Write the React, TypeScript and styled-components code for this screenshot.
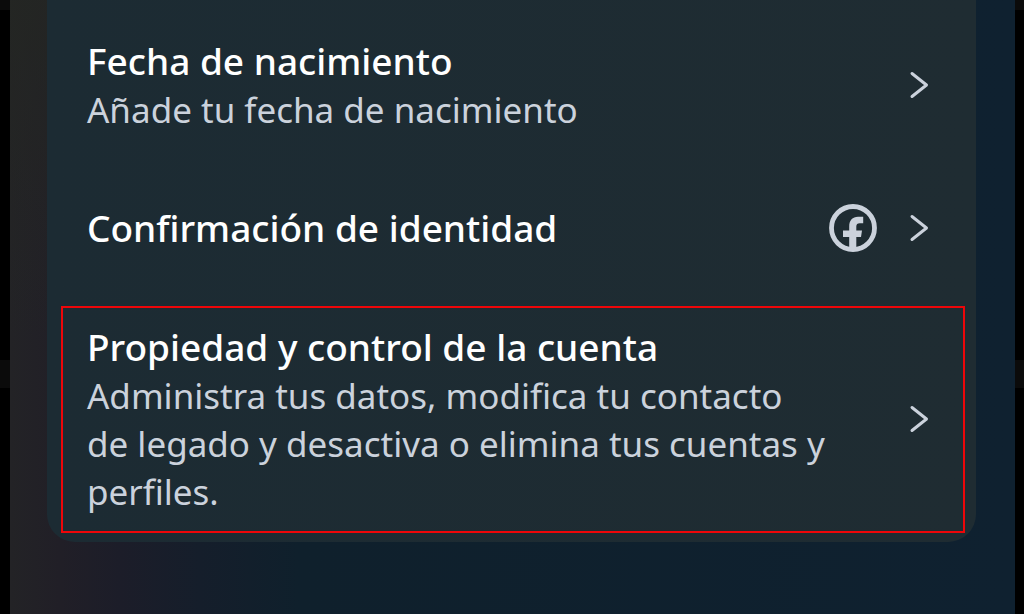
import React from "react";
import styled, { createGlobalStyle } from "styled-components";

const GlobalStyle = createGlobalStyle`
  * { box-sizing: border-box; }
  body {
    margin: 0;
    background: #000;
    font-family: "Noto Sans", "Open Sans", sans-serif;
  }
`;

const Backdrop = styled.div`
  min-height: 100vh;
  padding: 0 9px 0 10px;
  background: linear-gradient(
    #0b0b0b 10px,
    #000 10px,
    #000 360px,
    #0b0b0b 360px,
    #0b0b0b 388px,
    #000 388px
  );
`;

const Screen = styled.main`
  min-height: 100vh;
  padding: 0 39px 72px 37px;
  background:
    linear-gradient(to bottom, rgba(36, 39, 34, 0.7), rgba(36, 39, 34, 0) 55%) left / 37px 100% no-repeat,
    linear-gradient(to right, #232326 0, #211f27 50px, #1c1d29 110px, #151e2b 190px, #0f202c 290px, #0f2130 100%);
`;

const Card = styled.ul`
  display: flex;
  flex-direction: column;
  gap: 36px;
  margin: 0;
  padding: 20px 11px 9px 14px;
  list-style: none;
  background: linear-gradient(to right, #1c2b33, #1f2c32);
  border-radius: 0 0 28px 28px;
`;

const Row = styled.button<{ $highlighted?: boolean }>`
  display: flex;
  align-items: center;
  width: 100%;
  padding: 14px 34px 15px 24px;
  border: 2px solid ${(p) => (p.$highlighted ? "#ee0609" : "transparent")};
  background: none;
  color: #cbd2dc;
  font: inherit;
  text-align: left;
  cursor: pointer;
`;

const Texts = styled.span`
  flex: 1;
  display: flex;
  flex-direction: column;
  padding-right: 32px;
`;

const Title = styled.span`
  color: #fff;
  font-size: 37px;
  font-weight: 500;
  line-height: 50px;
`;

const Detail = styled.span`
  font-size: 35px;
  line-height: 48px;
  white-space: pre-line;
`;

const Trailing = styled.span`
  display: flex;
  align-items: center;
  gap: 32px;
`;

const Chevron = () => (
  <svg width="20" height="28" viewBox="0 0 20 28" fill="none" stroke="currentColor" strokeWidth="3" strokeLinecap="round" strokeLinejoin="round" aria-hidden="true">
    <path d="M3 2.500 17.500 14 3 25.500" />
  </svg>
);

const FacebookIcon = () => (
  <svg width="48" height="48" viewBox="0 0 48 48" fill="none" role="img" aria-label="Facebook">
    <circle cx="24" cy="24" r="21.500" stroke="currentColor" strokeWidth="4.800" />
    <path
      d="M20.200 46V33h-6.200v-6.600h6.200V22.500C20.200 16.300 23.600 12.800 29 12.800h5.200v6.400h-3.400c-2.500 0-3.500 1.100-3.500 3.400v3.800H33l-1 6.600h-4.700V46Z"
      fill="currentColor"
    />
  </svg>
);

const items = [
  { title: "Fecha de nacimiento", detail: "Añade tu fecha de nacimiento" },
  { title: "Confirmación de identidad", facebook: true },
  {
    title: "Propiedad y control de la cuenta",
    detail: "Administra tus datos, modifica tu contacto\nde legado y desactiva o elimina tus cuentas y\nperfiles.",
    highlighted: true,
  },
];

export default function App() {
  return (
    <>
      <GlobalStyle />
      <Backdrop>
        <Screen>
          <Card>
            {items.map((item) => (
              <li key={item.title}>
                <Row type="button" $highlighted={item.highlighted}>
                  <Texts>
                    <Title>{item.title}</Title>
                    {item.detail && <Detail>{item.detail}</Detail>}
                  </Texts>
                  <Trailing>
                    {item.facebook && <FacebookIcon />}
                    <Chevron />
                  </Trailing>
                </Row>
              </li>
            ))}
          </Card>
        </Screen>
      </Backdrop>
    </>
  );
}
